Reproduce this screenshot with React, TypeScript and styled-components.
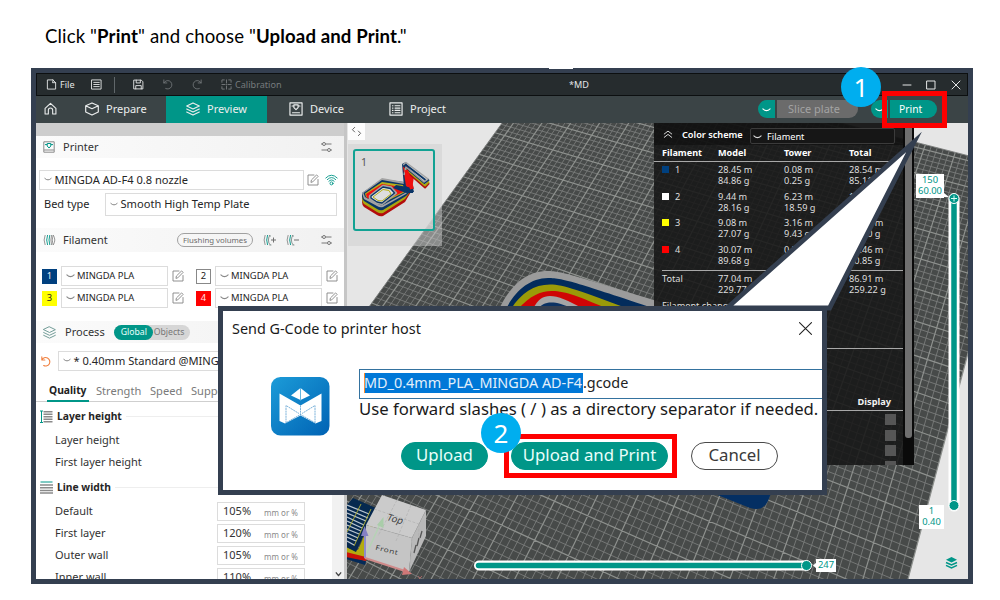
import React from 'react';
import styled, { createGlobalStyle, css } from 'styled-components';

const TEAL = '#009688';
const FRAME = '#343f50';

const Global = createGlobalStyle`
  * { box-sizing: border-box; }
  body { margin: 0; background: #fff; overflow: hidden; font-family: "Noto Sans", sans-serif; }
  svg { display: block; flex: none; }
`;

/* ---------- page ---------- */
const Page = styled.main`
  position: relative;
  width: 1000px;
  height: 600px;
  padding-left: 31px;
  overflow: hidden;
`;
const Headline = styled.h1`
  margin: 0 0 0 14px;
  height: 68px;
  padding-top: 24px;
  font: 400 18.6px/24px Lato, sans-serif;
  letter-spacing: 0.12px;
  color: #000;
  white-space: nowrap;
`;
const Window = styled.section`
  width: 942px;
  height: 516px;
  border: 5px solid ${FRAME};
  display: flex;
  flex-direction: column;
  overflow: hidden;
`;

/* ---------- title bar ---------- */
const TitleBar = styled.div`
  height: 23px;
  flex: none;
  display: flex;
  align-items: center;
  background: #262c2e;
  border: 1px solid #0c0f10;
  padding-left: 9px;
  color: #e4e6e6;
  font-size: 9.1px;
  white-space: nowrap;
`;
const Slot = styled.div<{ $w: number; $dim?: boolean; $center?: boolean }>`
  width: ${(p) => p.$w}px;
  flex: none;
  display: flex;
  align-items: center;
  gap: 3px;
  justify-content: ${(p) => (p.$center ? 'center' : 'flex-start')};
  color: ${(p) => (p.$dim ? '#767b7d' : 'inherit')};
`;
const Separator = styled.div`
  width: 1px;
  height: 16px;
  background: #60676a;
`;

/* ---------- tab bar ---------- */
const TabBar = styled.nav`
  height: 27px;
  flex: none;
  display: flex;
  align-items: stretch;
  background: #3b4446;
  color: #eceeee;
  font-size: 11px;
`;
const Tab = styled.div<{ $w: number; $pad: number; $active?: boolean }>`
  width: ${(p) => p.$w}px;
  padding: 0 0 2px ${(p) => p.$pad}px;
  display: flex;
  align-items: center;
  gap: 7px;
  background: ${(p) => (p.$active ? TEAL : 'transparent')};
`;
const SplitButton = styled.div<{ $ml: number; $w: number; $dim?: boolean }>`
  margin: 4px 0 0 ${(p) => p.$ml}px;
  width: ${(p) => p.$w}px;
  height: 18px;
  display: flex;
  gap: 2px;
  border-radius: 9px;
  overflow: hidden;
  color: ${(p) => (p.$dim ? '#a3a3a3' : '#fff')};
  font-size: ${(p) => (p.$dim ? 11 : 10.3)}px;
`;
const SplitArrow = styled.span`
  width: 17px;
  display: grid;
  place-items: center;
  background: ${TEAL};
`;
const SplitLabel = styled.span<{ $dim?: boolean }>`
  flex: 1;
  display: flex;
  align-items: center;
  padding: 0 0 ${(p) => (p.$dim ? 1 : 0)}px ${(p) => (p.$dim ? 11 : 9)}px;
  background: ${(p) => (p.$dim ? '#6b6b6b' : TEAL)};
  white-space: nowrap;
`;

/* ---------- body ---------- */
const Body = styled.div`
  flex: 1;
  display: flex;
  min-height: 0;
`;
const Sidebar = styled.aside`
  width: 311px;
  flex: none;
  border-right: 3px solid #c6c6c6;
  background: #fff;
  overflow: hidden;
  color: #333;
  font-size: 11px;
  white-space: nowrap;
`;
const Strip = styled.div`
  height: 13px;
  background: #cdcdcd;
`;
const SectionHead = styled.div<{ $h: number; $mb: number }>`
  height: ${(p) => p.$h}px;
  margin-bottom: ${(p) => p.$mb}px;
  padding: 0 11px 0 7px;
  display: flex;
  align-items: center;
  background: linear-gradient(90deg, #fbfbfb, #f1f1f1);
`;
const HeadText = styled.span<{ $gap: number }>`
  margin-left: ${(p) => p.$gap}px;
  padding-bottom: 2px;
`;
const Push = styled.span`
  flex: 1;
`;
const Row = styled.div<{ $h: number; $mb?: number; $pl?: number }>`
  height: ${(p) => p.$h}px;
  margin-bottom: ${(p) => p.$mb ?? 0}px;
  padding-left: ${(p) => p.$pl ?? 0}px;
  display: flex;
  align-items: center;
`;
const Select = styled.div<{ $w: number; $small?: boolean }>`
  width: ${(p) => p.$w}px;
  height: 100%;
  flex: none;
  display: flex;
  align-items: center;
  gap: ${(p) => (p.$small ? 2 : 2.5)}px;
  padding: 0 0 ${(p) => (p.$small ? 1 : 2)}px 4px;
  border: 1px solid #dcdcdc;
  background: #fff;
  color: #262626;
  font-size: ${(p) => (p.$small ? 9.4 : 11.1)}px;
`;
const Pill = styled.span`
  width: 76px;
  height: 14px;
  margin-right: 10px;
  border: 1px solid #a0a0a0;
  border-radius: 7px;
  display: grid;
  place-items: center;
  font-size: 7.8px;
  line-height: 10px;
  color: #6b6b6b;
`;
const Swatch = styled.span<{ $bg: string; $fg: string; $edge?: string }>`
  width: 15px;
  height: 15px;
  flex: none;
  display: grid;
  place-items: center;
  background: ${(p) => p.$bg};
  border: 1px solid ${(p) => p.$edge ?? p.$bg};
  color: ${(p) => p.$fg};
  font-size: 9.4px;
  line-height: 12px;
`;
const Slotted = styled.span`
  width: 154px;
  flex: none;
  height: 100%;
  display: flex;
  align-items: center;
  gap: 4px;
`;
const OptionLabel = styled.span`
  width: 61px;
  padding-bottom: 2px;
  color: #1f1f1f;
`;
const Toggle = styled.span`
  width: 76px;
  height: 15px;
  margin-left: 9px;
  display: flex;
  border-radius: 8px;
  background: #d6d6d6;
  font-size: 8.7px;
  line-height: 14px;
  color: #767676;
`;
const ToggleOn = styled.span`
  width: 39px;
  padding-left: 7px;
  margin-right: 1px;
  border-radius: 8px;
  background: ${TEAL};
  color: #e8fffb;
`;
const SubTabs = styled.div`
  height: 23px;
  padding-left: 11px;
  display: flex;
  border-bottom: 1px solid #cfcfcf;
  margin-bottom: 5px;
  color: #7a7a7a;
  font-size: 11.1px;
  line-height: 23px;
`;
const SubTab = styled.span<{ $w: number; $active?: boolean }>`
  width: ${(p) => p.$w}px;
  padding-left: 2px;
  flex: none;
  ${(p) =>
    p.$active &&
    css`
      height: 23px;
      border-bottom: 2px solid ${TEAL};
      color: #222;
      font-weight: 700;
      font-size: 10.3px;
    `}
`;
const GroupTitle = styled.div<{ $mb: number }>`
  height: 18px;
  margin-bottom: ${(p) => p.$mb}px;
  padding-left: 4px;
  display: flex;
  align-items: center;
  gap: 4px;
  font-size: 10.3px;
  line-height: 14px;
  font-weight: 700;
  color: #262626;
`;
const GroupRule = styled.span`
  flex: 1;
  height: 1px;
  background: #eee;
`;
const Options = styled.div`
  display: flex;
`;
const OptionList = styled.div`
  flex: 1;
`;
const Scroll = styled.div`
  width: 12px;
  height: 172px;
  background: #f1f1f1;
  display: flex;
  align-items: flex-end;
  justify-content: center;
`;
const OptionName = styled.span`
  width: 162px;
  padding-bottom: 2px;
`;
const ValueBox = styled.span`
  width: 88px;
  height: 19px;
  border: 1px solid #dcdcdc;
  display: flex;
  align-items: center;
  padding: 0 6px 1px 5px;
  justify-content: space-between;
  color: #333;
  small { font-size: 8px; color: #8a8a8a; padding-top: 3px; }
`;

/* ---------- 3D viewport ---------- */
const Viewport = styled.div`
  position: relative;
  flex: 1;
  overflow: hidden;
  background: #e6e6e6;
`;
const Collapse = styled.div`
  position: absolute;
  left: 1px;
  top: 0;
  width: 17px;
  height: 17px;
  background: #fdfdfd;
  display: grid;
  place-items: center;
`;
const PlateCard = styled.div`
  position: absolute;
  left: 1px;
  top: 21px;
  width: 94px;
  height: 102px;
  padding: 5px;
  background: rgba(205, 205, 205, 0.5);
`;
const Plate = styled.div`
  position: relative;
  width: 82px;
  height: 82px;
  border: 2px solid #12a293;
  border-radius: 3px;
  background: rgba(218, 218, 218, 0.72);
  span { position: absolute; left: 6px; top: 5px; font-size: 10.5px; line-height: 12px; color: #555; }
`;
const Legend = styled.div`
  position: absolute;
  left: 307px;
  top: 0;
  width: 260px;
  height: 342px;
  display: flex;
  background: rgba(23, 23, 23, 0.88);
  color: #dedede;
  font-size: 9.2px;
  line-height: 11px;
  white-space: nowrap;
  overflow: hidden;
`;
const LegendMain = styled.div`
  width: 249px;
  flex: none;
`;
const LegendScroll = styled.div`
  width: 11px;
  background: #0a0a0a;
  &::before { content: ''; display: block; margin: 0 auto; width: 7px; height: 315px; border-radius: 0 0 3px 3px; background: #6f6f6f; }
`;
const LegendTop = styled.div`
  height: 22px;
  padding-left: 9px;
  display: flex;
  align-items: center;
  background: rgba(10, 10, 10, 0.5);
  color: #fff;
  b { margin-left: 9px; width: 68px; font-weight: 600; }
`;
const LegendSelect = styled.div`
  width: 145px;
  height: 16px;
  margin-top: 4px;
  border: 1px solid #3b3b3b;
  border-radius: 2px;
  background: #161616;
  display: flex;
  align-items: center;
  gap: 5px;
  padding-left: 2px;
`;
const LegendHead = styled.div`
  height: 17px;
  padding: 2px 0 0 8px;
  display: grid;
  grid-template-columns: 56px 66px 65px 1fr;
  color: #fff;
  font-weight: 700;
  border-bottom: 1px solid #a8a8a8;
  font-size: 9.1px;
`;
const LegendRow = styled.div`
  height: 26.5px;
  padding: 2px 0 0 8px;
  display: grid;
  grid-template-columns: 56px 66px 65px 1fr;
  white-space: pre;
`;
const Key = styled.span<{ $c: string }>`
  display: flex;
  gap: 6px;
  &::before { content: ''; width: 7px; height: 7px; margin-top: 2px; background: ${(p) => p.$c}; }
`;
const LegendRule = styled.div<{ $mt: number }>`
  margin: ${(p) => p.$mt}px 0 0 8px;
  height: 1px;
  background: #a8a8a8;
`;
const DisplayHead = styled.div`
  margin-top: 47px;
  padding-right: 12px;
  height: 15px;
  text-align: right;
  font-weight: 700;
  color: #f2f2f2;
  border-bottom: 1px solid #a8a8a8;
`;
const Checks = styled.div`
  margin: 3px 0 0 231px;
  display: grid;
  gap: 4.5px;
  i { width: 11px; height: 11px; background: #565656; }
`;
const Tag = styled.div<{ $x: number; $y: number; $w: number; $h: number }>`
  position: absolute;
  left: ${(p) => p.$x}px;
  top: ${(p) => p.$y}px;
  width: ${(p) => p.$w}px;
  height: ${(p) => p.$h}px;
  background: #fff;
  color: ${TEAL};
  font-size: 9.4px;
  line-height: 11px;
  text-align: center;
  white-space: nowrap;
`;

/* ---------- call-outs over the window ---------- */
const Wedge = styled.svg`
  position: absolute;
  left: 0;
  top: 0;
`;
const Step = styled.div<{ $x: number; $y: number }>`
  position: absolute;
  left: ${(p) => p.$x}px;
  top: ${(p) => p.$y}px;
  width: 40px;
  height: 40px;
  border-radius: 50%;
  background: #00aeef;
  color: #fff;
  font: 400 26px/40px "Noto Sans", sans-serif;
  text-align: center;
`;
const RedBox = styled.div<{ $x: number; $y: number; $w: number; $h: number }>`
  position: absolute;
  left: ${(p) => p.$x}px;
  top: ${(p) => p.$y}px;
  width: ${(p) => p.$w}px;
  height: ${(p) => p.$h}px;
  border: 5px solid #fe0000;
`;
const Dialog = styled.div`
  position: absolute;
  left: 218px;
  top: 306px;
  width: 609px;
  height: 189px;
  border: 5px solid ${FRAME};
  background: #fff;
  overflow: hidden;
  color: #1a1a1a;
  white-space: nowrap;
`;
const DialogTitle = styled.div`
  height: 34px;
  padding: 0 10px 0 9px;
  display: flex;
  align-items: center;
  justify-content: space-between;
  font-size: 14.4px;
`;
const DialogBody = styled.div`
  display: flex;
  padding: 24px 0 0 48px;
`;
const Logo = styled.div`
  margin: 8px 29px 0 0;
`;
const FileInput = styled.div`
  width: 480px;
  height: 30px;
  padding: 3px 0 0 4px;
  border: 1px solid #34729f;
  display: flex;
  font-size: 14.4px;
  line-height: 20px;
  color: #222;
`;
const Selected = styled.span`
  width: 219px;
  height: 20px;
  border-left: 1px solid #ff8a2a;
  background: #0078d7;
  color: #e3f0fb;
  text-indent: -1px;
`;
const Hint = styled.div`
  height: 20px;
  font-size: 16.7px;
  line-height: 19px;
`;
const Actions = styled.div`
  margin: 23px 0 0 42px;
  display: flex;
`;
const Action = styled.button<{ $w: number; $mr?: number; $plain?: boolean }>`
  width: ${(p) => p.$w}px;
  height: 28px;
  margin: 0 ${(p) => p.$mr ?? 0}px 0 0;
  padding: 0 0 2px;
  border-radius: 14px;
  border: 1px solid ${(p) => (p.$plain ? '#4a4a4a' : TEAL)};
  background: ${(p) => (p.$plain ? '#fff' : TEAL)};
  color: ${(p) => (p.$plain ? '#3a3a3a' : '#e9fffb')};
  font: 400 16.8px/24px "Noto Sans", sans-serif;
`;

/* ---------- icons ---------- */
type IconProps = { d: string; s?: number; c?: string; w?: number; box?: number };
const Icon = ({ d, s = 12, c = 'currentColor', w = 1, box = 12 }: IconProps) => (
  <svg width={s} height={s} viewBox={`0 0 ${box} ${box}`} fill="none" stroke={c} strokeWidth={w} strokeLinejoin="round" strokeLinecap="round">
    <path d={d} />
  </svg>
);
const Chevron = ({ c = '#888', s = 8 }: { c?: string; s?: number }) => <Icon s={s} box={8} c={c} d="M.8 3.4 Q4 6.6 7.2 3.4" />;
const D = {
  file: 'M7.5 1H1.5V11H10.5V4H7.5ZM7.5 1L10.5 4',
  list: 'M1 1H11V11H1ZM3 3.7H9M3 6H9M3 8.3H9',
  save: 'M1.2 1.2H9L10.8 3V10.8H1.2ZM3.5 1.2V4.3H8V1.2M3 10.8V7.2H9V10.8',
  undo: 'M2 1V4.3H5.3M2 4.3A4.6 4.6 0 1 1 4 10.4',
  redo: 'M10 1V4.3H6.7M10 4.3A4.6 4.6 0 1 0 8 10.4',
  home: 'M1 5.8L6 1.2L11 5.8V11H8V7.6A2 2 0 0 0 4 7.6V11H1Z',
  cube: 'M6 .8L11.4 3.2V8.6L6 11.2L.6 8.6V3.2ZM.6 3.2L6 5.8L11.4 3.2',
  layers: 'M6 .8L11.4 3.4L6 6L.6 3.4ZM.6 6L6 8.6L11.4 6M.6 8.6L6 11.2L11.4 8.6',
  device: 'M.8 .8H11.2V11.2H.8ZM3 9.2H9M2.6 3.4H4.2M7.8 3.4H9.4M4.2 2.4H7.8V4.8L6 6.6L4.2 4.8Z',
  project: 'M.8 .8H11.2V11.2H.8ZM3 3.2H3.4M5.2 3.2H9.4M3 5.2H3.4M5.2 5.2H9.4M3 7.2H3.4M5.2 7.2H9.4M3 9.2H3.4M5.2 9.2H9.4',
  calib: 'M3.6 1H1V3.6M8.4 1H11V3.6M3.6 11H1V8.4M8.4 11H11V8.4M6 1V4.4M6 7.6V11M1 6H4.4M7.6 6H11M6 6H6.1',
  edit: 'M7 1H1V11H11V5.5M4 8L4.4 6L9.6 .9L11.1 2.4L6 7.6Z',
};
const Tune = () => (
  <svg width="13" height="12" viewBox="0 0 13 12" fill="none" stroke="#777" strokeWidth="1">
    <path d="M1 3H2.5M5.5 3H11.5M1.5 9H7.5M10.5 9H12" />
    <circle cx="4" cy="3" r="1.5" />
    <circle cx="9" cy="9" r="1.5" />
  </svg>
);
const PrinterIcon = () => (
  <svg width="12" height="12" viewBox="0 0 12 12" fill="none">
    <path d="M.8 .8H11.2V11.2H.8ZM1 9H11" stroke="#8a8a8a" />
    <path d="M2 3.6H4.2M7.8 3.6H10M4.2 2.5H7.8V5L6 7L4.2 5Z" stroke={TEAL} />
  </svg>
);
const Spool = ({ tail }: { tail?: string }) => (
  <svg width="13" height="12" viewBox="0 0 13 12" fill="none" strokeWidth=".9">
    <path d="M2.2 1Q0 6 2.2 11" stroke="#8a8a8a" />
    <path d="M4.6 1Q2.8 6 4.6 11" stroke={TEAL} />
    {tail ? (
      <>
        <path d="M7.4 1Q5.4 2.5 5.4 6Q5.4 9.5 7.4 11M6 1L7.4 2.6M6.4 11H8.4" stroke="#7f8c8a" />
        <path d={tail} stroke="#707070" strokeWidth="1" />
      </>
    ) : (
      <>
        <path d="M6.8 1Q5.2 6 6.8 11" stroke={TEAL} />
        <path d="M8.6 1Q7.2 6 8.6 11M10.2 1Q13.4 6 10.2 11Q8.2 6 10.2 1Z" stroke="#8a8a8a" />
      </>
    )}
  </svg>
);
const Wifi = () => (
  <svg width="13" height="12" viewBox="0 0 13 12" fill="none" stroke={TEAL} strokeWidth=".9" strokeLinecap="round">
    <path d="M.8 4Q6.5 -1.8 12.2 4M2.3 5.6Q6.5 1.3 10.7 5.6M3.8 7.3Q6.5 4.4 9.2 7.3" />
    <circle cx="6.5" cy="9.4" r="1.5" />
  </svg>
);
const Bars = ({ side }: { side?: boolean }) => (
  <svg width="13" height="13" viewBox="0 0 13 13" fill="none">
    <path
      d={side ? 'M3.5 1.7H12.5M3.5 4.2H12.5M3.5 6.7H12.5M3.5 9.2H12.5M3.5 11.7H12.5' : 'M0 4H13M0 6.7H13M0 9.4H13M0 12H13'}
      stroke="#8a8a8a"
      strokeWidth="1.5"
    />
    <path d={side ? 'M0 1H3M0 12.5H3M1.5 1V12.5' : 'M.5 1H12.5'} stroke={TEAL} />
  </svg>
);
const Edit = () => <Icon d={D.edit} c="#858585" w={0.9} s={12} />;

const AppLogo = () => (
  <svg width="59" height="59" viewBox="0 0 59 59">
    <defs>
      <linearGradient id="logoBg" x1="0" y1="0" x2="1" y2="1">
        <stop offset="0" stopColor="#1c9cd8" />
        <stop offset="1" stopColor="#0062b4" />
      </linearGradient>
    </defs>
    <rect width="58.5" height="58.5" rx="9.5" fill="url(#logoBg)" />
    <path d="M29.5 11L39 18.5L29.5 23L20 18.5Z" fill="#fff" />
    <path d="M29.5 11V23.5" stroke="#65b6df" strokeWidth="1" />
    <path d="M8.5 16.5L29.5 28.5L50.5 16.5V44L44.5 46.5L29.5 38.5L14 46.5L8.5 44Z" fill="#fff" />
    <path d="M15 46V28.5L28 36.5M44 46V28.5L31 36.5M15.5 45.5L29.5 37.5L43.5 45.5M29.5 28.5V38.5" fill="none" stroke="#5a9fd0" strokeWidth=".8" strokeDasharray="2 .6" />
  </svg>
);

/* ---------- perspective build plate ---------- */
type V3 = [number, number, number];
const CORNER: V3 = [555, 49, 1];
const VP_ROWS: V3 = [-1900, -579, 1];
const VP_COLS: V3 = [1334, -1027, 1];
const COLS = 87;
const ROWS = 118;
const STEP_U = -0.1584 / COLS;
const STEP_V = -0.0034;
const project = (u: number, v: number) => {
  const a = u * STEP_U;
  const b = v * STEP_V;
  const w = 1 + a + b;
  const x = (CORNER[0] + a * VP_ROWS[0] + b * VP_COLS[0]) / w;
  const y = (CORNER[1] + a * VP_ROWS[1] + b * VP_COLS[1]) / w;
  return `${x.toFixed(2)} ${y.toFixed(2)}`;
};
const gridPath = (major: boolean) => {
  let d = '';
  for (let u = 0; u <= COLS; u++) if ((u % 5 === 2) === major) d += `M${project(u, 0)}L${project(u, ROWS)}`;
  for (let v = 0; v <= ROWS; v++) if ((v % 5 === 1) === major) d += `M${project(0, v)}L${project(COLS, v)}`;
  return d;
};
const MINOR = gridPath(false);
const MAJOR = gridPath(true);

const Scene = () => (
  <svg width="621" height="457" viewBox="347 122 621 457">
    <path d={`M${project(0, 0)}L${project(COLS, 0)}L${project(COLS, ROWS)}L${project(0, ROWS)}Z`} fill="#474a49" />
    <path d={MINOR} stroke="#797c7a" strokeWidth=".9" fill="none" />
    <path d={MAJOR} stroke="#8e918e" strokeWidth="1.2" fill="none" />
    {/* printed part, far side */}
    <path d="M499 308C508 290 522 270 548 270C562 270 575 275 660 301V308Z" fill="#9b9b9b" />
    <path d="M506 308C515 290 530 277 548 277C564 277 580 283 656 308Z" fill="#032c5c" />
    <path d="M511 308C521 292 534 283.5 550 283.5C564 283.5 580 290 629 308Z" fill="#9a9a08" />
    <path d="M518 308C530 295 540 290 552 290C566 290 580 296 608 308Z" fill="#cf0505" />
    <path d="M533 308C538 298 543 295 550 295C558 295 568 299 583 308Z" fill="#a5a5a5" />
    <path d="M538 308C543 301 553 298 573 308Z" fill="#0b3263" />
    {/* printed part, near side */}
    <path d="M715 493L750 507Q763 511 768 500L772 490Z" fill="#042f63" />
    {/* purge tower */}
    <path d="M346 555L366 560L365 564L346 558Z" fill="#042a58" />
    <path d="M346 548L368 553L366 560L346 556Z" fill="#c81208" />
    <path d="M346 544L358 549L376 508L378 512L366 556L346 551Z" fill="#b3ac10" />
    <path d="M346 505L353 497L376 507L356 551L346 546Z" fill="#06294f" />
    <path d="M347 504L369 513M347 508L368 517M347 512L366 520M347 516L364 524M347 520L362 527M347 524L361 530M347 528L359 533M347 532L358 537M347 536L356 540M347 540L354 544" stroke="#b8c4cf" strokeWidth="1.3" />
    <path d="M361 503L347 531M371 508L354 545" stroke="#b6b234" strokeWidth=".9" />
    {/* orientation cube */}
    <path d="M382 494L426 509L412 537L366 524Z" fill="#cbcbcb" />
    <path d="M366 524L412 537L409 571L364 557Z" fill="#c5c5c5" />
    <path d="M426 509V535L409 571L412 537Z" fill="#b9b9b9" />
    <path d="M366 524L412 537L426 509M412 537L410 570M397 499L378 535M411 504L396 540M374 508L419 523M419 523L418 552" stroke="#adadad" strokeWidth=".6" strokeDasharray="3 1.5" fill="none" />
    <path d="M414 552L416 544M417 545L419 537M420 537L422 530" stroke="#555" strokeWidth="1.3" />
    <text x="0" y="0" transform="translate(386 519) rotate(15) skewX(-12)" fontSize="9.500" fill="#3c3c3c">Top</text>
    <text x="0" y="0" transform="translate(375 548.5) rotate(14) scale(1 .8)" fontSize="8.500" letterSpacing=".4" fill="#3c3c3c">Front</text>
    <path d="M365 557V532" stroke="#8f8ccb" strokeWidth="2" />
    <path d="M361 535L364.5 525L368.5 535Z" fill="#8480c4" />
    <path d="M367 552L380 523" stroke="#b5d3b5" strokeWidth="1.5" />
    <path d="M377 524L383.5 516L383.5 527Z" fill="#a9cda9" />
    <path d="M365 557L405 570" stroke="#cf8a8a" strokeWidth="2" />
    <path d="M404 566L412 573L402 574Z" fill="#d07878" />
    <path d="M418 575L421 579M422 575L418 579" stroke="#b76b6b" strokeWidth=".8" />
    {/* layer slider */}
    <path d="M954 198V505" stroke="#fff" strokeWidth="11" strokeLinecap="round" />
    <path d="M954 198V505" stroke={TEAL} strokeWidth="5.5" />
    <circle cx="954" cy="197.5" r="5" fill={TEAL} stroke="#fff" strokeWidth="1" />
    <path d="M951 197.5H957M954 194.5V200.5" stroke="#d9fff9" strokeWidth="1" />
    <circle cx="954" cy="504.5" r="5" fill={TEAL} stroke="#fff" strokeWidth="1" />
    {/* move slider */}
    <path d="M479 564.5H806" stroke="#fff" strokeWidth="10" strokeLinecap="round" />
    <path d="M478.5 564.5H806" stroke={TEAL} strokeWidth="5.5" strokeLinecap="round" />
    <circle cx="806.5" cy="564.5" r="5" fill={TEAL} stroke="#fff" strokeWidth="1" />
    <path d="M813 564.5L817 561V568ZM944 192L949 196H944Z" fill="#fff" />
    {/* layers shortcut */}
    <path d="M951.5 556L957 558.7L951.5 561.4L946 558.7Z" fill={TEAL} />
    <path d="M946 561.5L951.5 564L957 561.5M946 564.3L951.5 567L957 564.3" stroke={TEAL} strokeWidth="1.5" fill="none" />
  </svg>
);

/* model preview: stacked colour bands of a rounded ring and a folded stroke */
const MiniModel = () => (
  <svg width="78" height="78" viewBox="355 151 78 78" fill="none" strokeLinejoin="round" strokeLinecap="butt">
    {/* ring */}
    <path d="M362 196L382 181L404 184L412 190L405 202L383 216Q380 217 377 215L364 207Q362 205 362 202Z" fill="#b40d0d" />
    <path d="M362 194L382 180L404 183L412 189L405 199L383 213Q380 214 377 212L364 204Q362 202 362 199Z" fill="#aaa60f" />
    <path d="M362 193L382 179L404 182L414 188L406 196L383 210Q380 211 377 209L364 201Q362 199 362 196Z" fill="#0a3566" />
    <path d="M362 193L382 178L404 182L414 186L406 194L383 207Q380 208 377 206L364 199Z" fill="#a3a3a3" />
    <path d="M363.5 193L382 180L404 184L410 187L405 193L383 205Q380 206 378 204L365 197Z" fill="#0a3566" />
    <path d="M365 193.5L382 182L403 185L405 192L383 203Q380 204 378 203L366 197Z" fill="#b5b01a" />
    <path d="M366 194L382 184L401 187L403 192L383 201.5Q380 202 378 201L367 198Z" fill="#ef1010" />
    <path d="M370 196L383 186L391 187.5L396 193L382 204L377 203L370 199Z" fill="#dcdcdc" stroke="#a3a3a3" strokeWidth="2.5" />
    <path d="M371 196L383 187L390.5 188.5L394.5 193L382 203L377 202L371 198Z" fill="#dcdcdc" stroke="#0a3566" strokeWidth="1.3" />
    <path d="M373 197L383 189.5L389 190.5L391 194L382 201L378 200.5Z" fill="#dedede" stroke="#b5b01a" strokeWidth="1" />
    {/* folded stroke */}
    <path d="M402 164L406 162L413 188L413 193L408 193L404 187Z" fill="#0a3566" />
    <path d="M403 167L407 165L414 176L412 190L406 186Z" fill="#ef1010" />
    <path d="M396 185L413 188L414 192L406 193L393 188Z" fill="#0a3566" />
    <path d="M405 170L425 187.5L429 183" stroke="#b40d0d" strokeWidth="2" />
    <path d="M405 168L425 185.5L429 181.5" stroke="#aaa60f" strokeWidth="2" />
    <path d="M404 166L424.5 183L429 179.5" stroke="#0a3566" strokeWidth="2" />
    <path d="M403 165L406 162.5L428 179L424 182L406 167L404 175" stroke="#a3a3a3" strokeWidth="1.5" />
    <path d="M405.5 164.5L425.5 180" stroke="#0a3566" strokeWidth="1.8" />
    <path d="M406 170L412 189" stroke="#ef1010" strokeWidth="4" />
  </svg>
);

/* ---------- data ---------- */
const USAGE = [
  ['#00407f', '1', '28.45 m\n84.86 g', '0.08 m\n0.25 g', '28.54 m\n85.11 g'],
  ['#ffffff', '2', '9.44 m\n28.16 g', '6.23 m\n18.59 g', '15.68 m\n46.75 g'],
  ['#ffff00', '3', '9.08 m\n27.07 g', '3.16 m\n9.43 g', '12.24 m\n36.50 g'],
  ['#ff0000', '4', '30.07 m\n89.68 g', '0.39 m\n1.17 g', '30.46 m\n90.85 g'],
];
const WIDTHS = [['Default', '105%'], ['First layer', '120%'], ['Outer wall', '105%'], ['Inner wall', '110%']];

const FilamentRow = ({ mb, items }: { mb: number; items: [string, string, string, string?][] }) => (
  <Row $h={20} $mb={mb} $pl={6}>
    {items.map(([n, bg, fg, edge]) => (
      <Slotted key={n}>
        <Swatch $bg={bg} $fg={fg} $edge={edge}>{n}</Swatch>
        <Select $w={107} $small><Chevron s={9} />MINGDA PLA</Select>
        <Edit />
      </Slotted>
    ))}
  </Row>
);

export default function App() {
  return (
    <Page>
      <Global />
      <Headline>Click "<b>Print</b>" and choose "<b>Upload and Print</b>."</Headline>

      <Window>
        <TitleBar>
          <Slot $w={45}><Icon d={D.file} s={11} />File</Slot>
          <Slot $w={23}><Icon d={D.list} s={11} /></Slot>
          <Separator />
          <Slot $w={47} $center><Icon d={D.save} s={11} /></Slot>
          <Slot $w={30} $dim><Icon d={D.undo} s={11} w={0.9} /></Slot>
          <Slot $w={29} $dim><Icon d={D.redo} s={11} w={0.9} /></Slot>
          <Slot $w={348} $dim><Icon d={D.calib} s={11} />Calibration</Slot>
          <Slot $w={332}>*MD</Slot>
          <Slot $w={24}><Icon d="M2 6H10" s={12} /></Slot>
          <Slot $w={25}><Icon d="M2 2H10V10H2Z" s={12} /></Slot>
          <Slot $w={16}><Icon d="M2 2L10 10M10 2L2 10" s={12} /></Slot>
        </TitleBar>

        <TabBar>
          <Tab $w={42} $pad={8}><Icon d={D.home} s={13} /></Tab>
          <Tab $w={88} $pad={7}><Icon d={D.cube} s={14} />Prepare</Tab>
          <Tab $w={101} $pad={20} $active><Icon d={D.layers} s={14} />Preview</Tab>
          <Tab $w={100} $pad={22}><Icon d={D.device} s={14} />Device</Tab>
          <Tab $w={391} $pad={22}><Icon d={D.project} s={14} />Project</Tab>
          <SplitButton $ml={0} $w={100} $dim>
            <SplitArrow><Chevron c="#fff" s={9} /></SplitArrow>
            <SplitLabel $dim>Slice plate</SplitLabel>
          </SplitButton>
          <SplitButton $ml={13} $w={66}>
            <SplitArrow><Chevron c="#fff" s={9} /></SplitArrow>
            <SplitLabel>Print</SplitLabel>
          </SplitButton>
        </TabBar>

        <Body>
          <Sidebar>
            <Strip />
            <SectionHead $h={22} $mb={12}>
              <PrinterIcon /><HeadText $gap={8}>Printer</HeadText><Push /><Tune />
            </SectionHead>
            <Row $h={20} $mb={3} $pl={3}>
              <Select $w={265}><Chevron />MINGDA AD-F4 0.8 nozzle</Select>
              <Slot $w={17} $center><Edit /></Slot>
              <Slot $w={21} $center><Wifi /></Slot>
            </Row>
            <Row $h={23} $mb={12} $pl={8}>
              <OptionLabel>Bed type</OptionLabel>
              <Select $w={232}><Chevron />Smooth High Temp Plate</Select>
            </Row>
            <SectionHead $h={24} $mb={14}>
              <Spool /><HeadText $gap={7}>Filament</HeadText><Push />
              <Pill>Flushing volumes</Pill>
              <Spool tail="M8 6H13M10.5 3.5V8.5" />
              <Slot $w={10} />
              <Spool tail="M8 6H13" />
              <Slot $w={21} />
              <Tune />
            </SectionHead>
            <FilamentRow mb={2} items={[['1', '#00407f', '#e8eef5'], ['2', '#fff', '#222', '#888']]} />
            <FilamentRow mb={13} items={[['3', '#ffff00', '#222'], ['4', '#ff0000', '#ffe0e0']]} />
            <SectionHead $h={22} $mb={8}>
              <Icon d={D.layers} s={13} c="#6f9a95" w={0.9} /><HeadText $gap={9}>Process</HeadText>
              <Toggle><ToggleOn>Global</ToggleOn>Objects</Toggle>
            </SectionHead>
            <Row $h={20} $mb={8} $pl={4}>
              <Slot $w={18}><Icon d={D.undo} s={11} c="#f08040" w={1.2} /></Slot>
              <Select $w={270}><Chevron />* 0.40mm Standard @MINGDA AD-F4</Select>
            </Row>
            <SubTabs>
              <SubTab $w={42} $active>Quality</SubTab>
              <SubTab $w={5} />
              <SubTab $w={54}>Strength</SubTab>
              <SubTab $w={41}>Speed</SubTab>
              <SubTab $w={60}>Support</SubTab>
            </SubTabs>
            <Options>
              <OptionList>
                <GroupTitle $mb={4}><Bars side />Layer height<GroupRule /></GroupTitle>
                <Row $h={22} $pl={19}><OptionName>Layer height</OptionName></Row>
                <Row $h={22} $mb={5} $pl={19}><OptionName>First layer height</OptionName></Row>
                <GroupTitle $mb={4}><Bars />Line width<GroupRule /></GroupTitle>
                {WIDTHS.map(([name, value]) => (
                  <Row key={name} $h={22} $pl={19}>
                    <OptionName>{name}</OptionName>
                    <ValueBox>{value}<small>mm or %</small></ValueBox>
                  </Row>
                ))}
              </OptionList>
              <Scroll><Icon d="M2 2.5L4 5L6 2.5" box={8} s={9} c="#444" w={1.2} /></Scroll>
            </Options>
          </Sidebar>

          <Viewport>
            <Scene />
            <Collapse><Icon d="M4 1.5L1.5 4L4 6.5M8 5.5L10.5 8L8 10.5" c="#555" s={11} /></Collapse>
            <PlateCard><Plate><MiniModel /><span>1</span></Plate></PlateCard>
            <Legend>
              <LegendMain>
                <LegendTop>
                  <Icon d="M1.5 6L6 2.5L10.5 6M1.5 10L6 6.5L10.5 10" s={10} />
                  <b>Color scheme</b>
                  <LegendSelect><Chevron c="#ddd" s={9} />Filament</LegendSelect>
                </LegendTop>
                <LegendHead><span>Filament</span><span>Model</span><span>Tower</span><span>Total</span></LegendHead>
                {USAGE.map(([c, n, model, tower, total]) => (
                  <LegendRow key={n}><Key $c={c}>{n}</Key><span>{model}</span><span>{tower}</span><span>{total}</span></LegendRow>
                ))}
                <LegendRule $mt={2} />
                <LegendRow><span>Total</span><span>{'77.04 m\n229.77 g'}</span><span>{'9.87 m\n29.45 g'}</span><span>{'86.91 m\n259.22 g'}</span></LegendRow>
                <LegendRow><span>Filament change times</span></LegendRow>
                <LegendRule $mt={24} />
                <DisplayHead>Display</DisplayHead>
                <Checks><i /><i /><i /><i /></Checks>
              </LegendMain>
              <LegendScroll />
            </Legend>
            <Tag $x={569} $y={51} $w={28} $h={24}>150<br />60.00</Tag>
            <Tag $x={572} $y={382} $w={25} $h={24}>1<br />0.40</Tag>
            <Tag $x={469} $y={436} $w={20} $h={13}>247</Tag>
          </Viewport>
        </Body>
      </Window>

      <Wedge width="1000" height="600" viewBox="0 0 1000 600">
        <path d="M549 68.5H573" stroke="#fff" />
        <path d="M727 308L914 142L829.5 308Z" fill="#fff" stroke={FRAME} strokeWidth="4.8" strokeMiterlimit="10" />
      </Wedge>
      <RedBox $x={882} $y={91} $w={65} $h={37} />
      <Step $x={841} $y={67}>1</Step>

      <Dialog>
        <DialogTitle>
          Send G-Code to printer host
          <Icon d="M.5 .5L11.5 11.5M11.5 .5L.5 11.5" s={13} c="#222" />
        </DialogTitle>
        <DialogBody>
          <Logo><AppLogo /></Logo>
          <div>
            <FileInput><Selected>MD_0.4mm_PLA_MINGDA AD-F4</Selected>.gcode</FileInput>
            <Hint>Use forward slashes ( / ) as a directory separator if needed.</Hint>
            <Actions>
              <Action $w={87} $mr={23}>Upload</Action>
              <Action $w={157} $mr={23}>Upload and Print</Action>
              <Action $w={87} $plain>Cancel</Action>
            </Actions>
          </div>
        </DialogBody>
      </Dialog>
      <RedBox $x={504} $y={434} $w={173} $h={44} />
      <Step $x={481} $y={413}>2</Step>
    </Page>
  );
}
